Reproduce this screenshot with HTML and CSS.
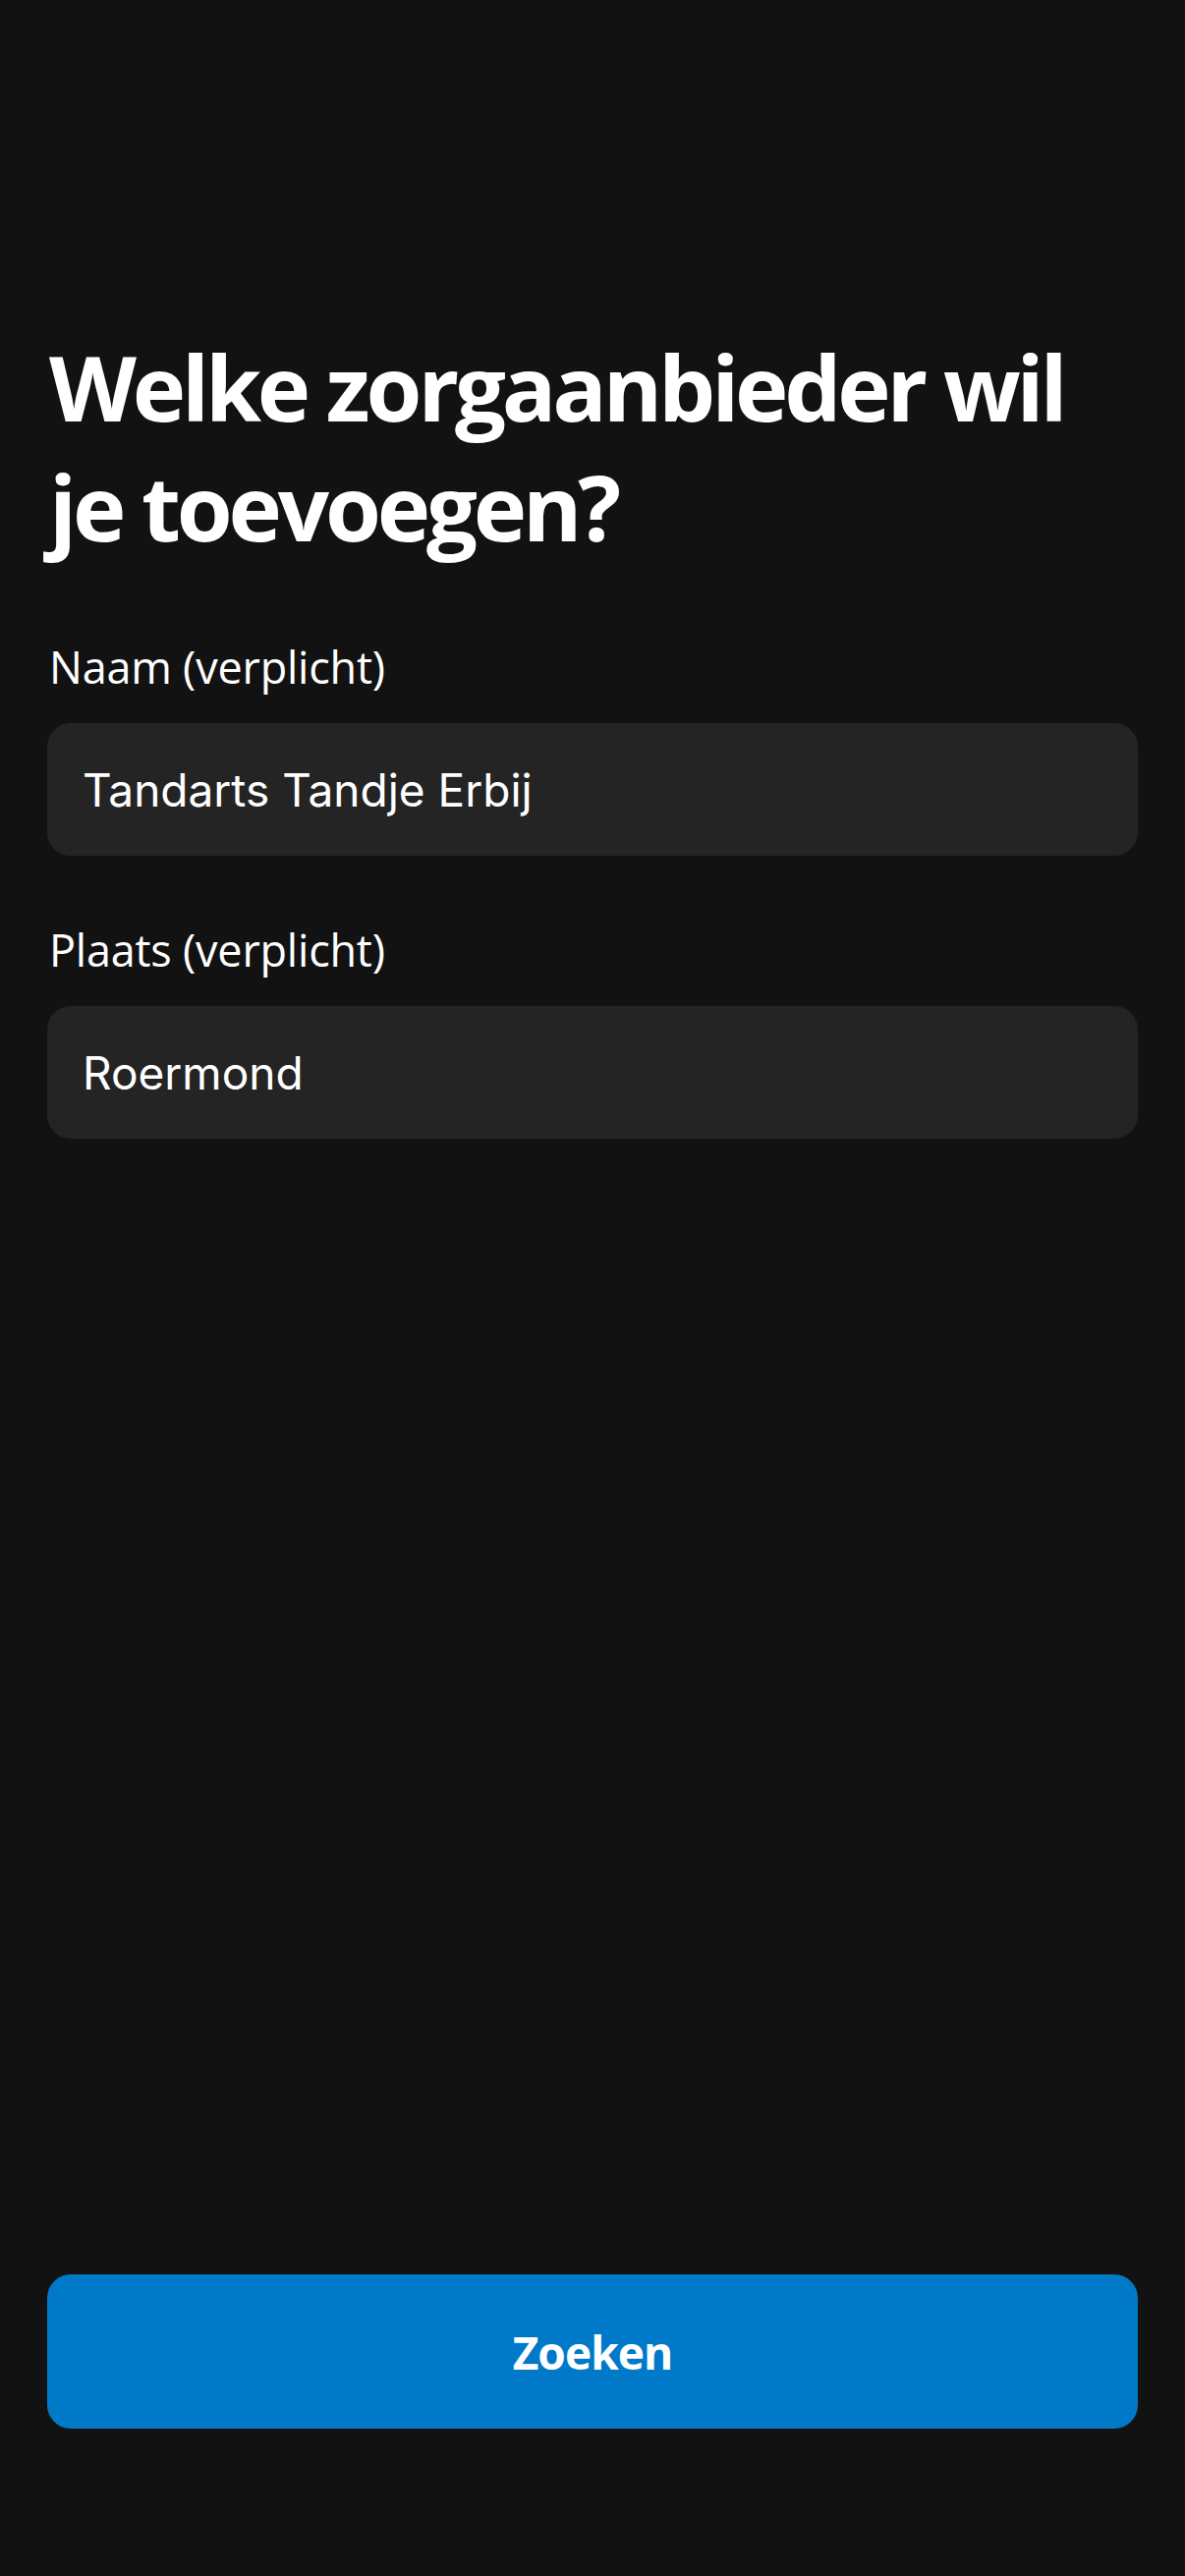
FILE: index.html
```html
<!DOCTYPE html>
<html lang="nl">
<head>
<meta charset="utf-8">
<title>Zorgaanbieder toevoegen</title>
<link rel="stylesheet" href="styles.css">
</head>
<body>
<main class="screen">
  <h1 class="title">Welke zorgaanbieder wil je toevoegen?</h1>
  <form class="form">
    <label class="field">
      <span class="label">Naam (verplicht)</span>
      <span class="input">Tandarts Tandje Erbij</span>
    </label>
    <label class="field">
      <span class="label">Plaats (verplicht)</span>
      <span class="input">Roermond</span>
    </label>
  </form>
  <button class="button" type="button">Zoeken</button>
</main>
</body>
</html>
```
FILE: styles.css
```css
html, body {
  margin: 0;
  padding: 0;
  background: #121212;
}
.screen {
  box-sizing: border-box;
  min-height: 2622px;
  display: flex;
  flex-direction: column;
  padding: 333px 48px 150px;
  color: #ffffff;
  font-family: "Open Sans", "Noto Sans", sans-serif;
}
.title {
  margin: 0 0 0 2px;
  font-size: 92px;
  line-height: 122px;
  font-weight: 700;
  letter-spacing: -0.045em;
  max-width: 1060px;
}
.form {
  display: flex;
  flex-direction: column;
  gap: 69px;
  margin-top: 75px;
}
.field {
  display: flex;
  flex-direction: column;
  gap: 30px;
}
.label {
  font-size: 45px;
  line-height: 54px;
  padding-left: 2px;
  letter-spacing: -0.005em;
}
.input {
  display: flex;
  align-items: center;
  height: 135px;
  padding: 0 36px;
  background: #242424;
  border-radius: 24px;
  font-family: "Inter", "Roboto", sans-serif;
  font-size: 46px;
}
.button {
  margin-top: auto;
  height: 157px;
  border: 0;
  border-radius: 24px;
  background: #0079c8;
  color: #ffffff;
  font-family: "Open Sans", "Noto Sans", sans-serif;
  font-weight: 700;
  font-size: 46px;
  letter-spacing: -0.02em;
}
```
